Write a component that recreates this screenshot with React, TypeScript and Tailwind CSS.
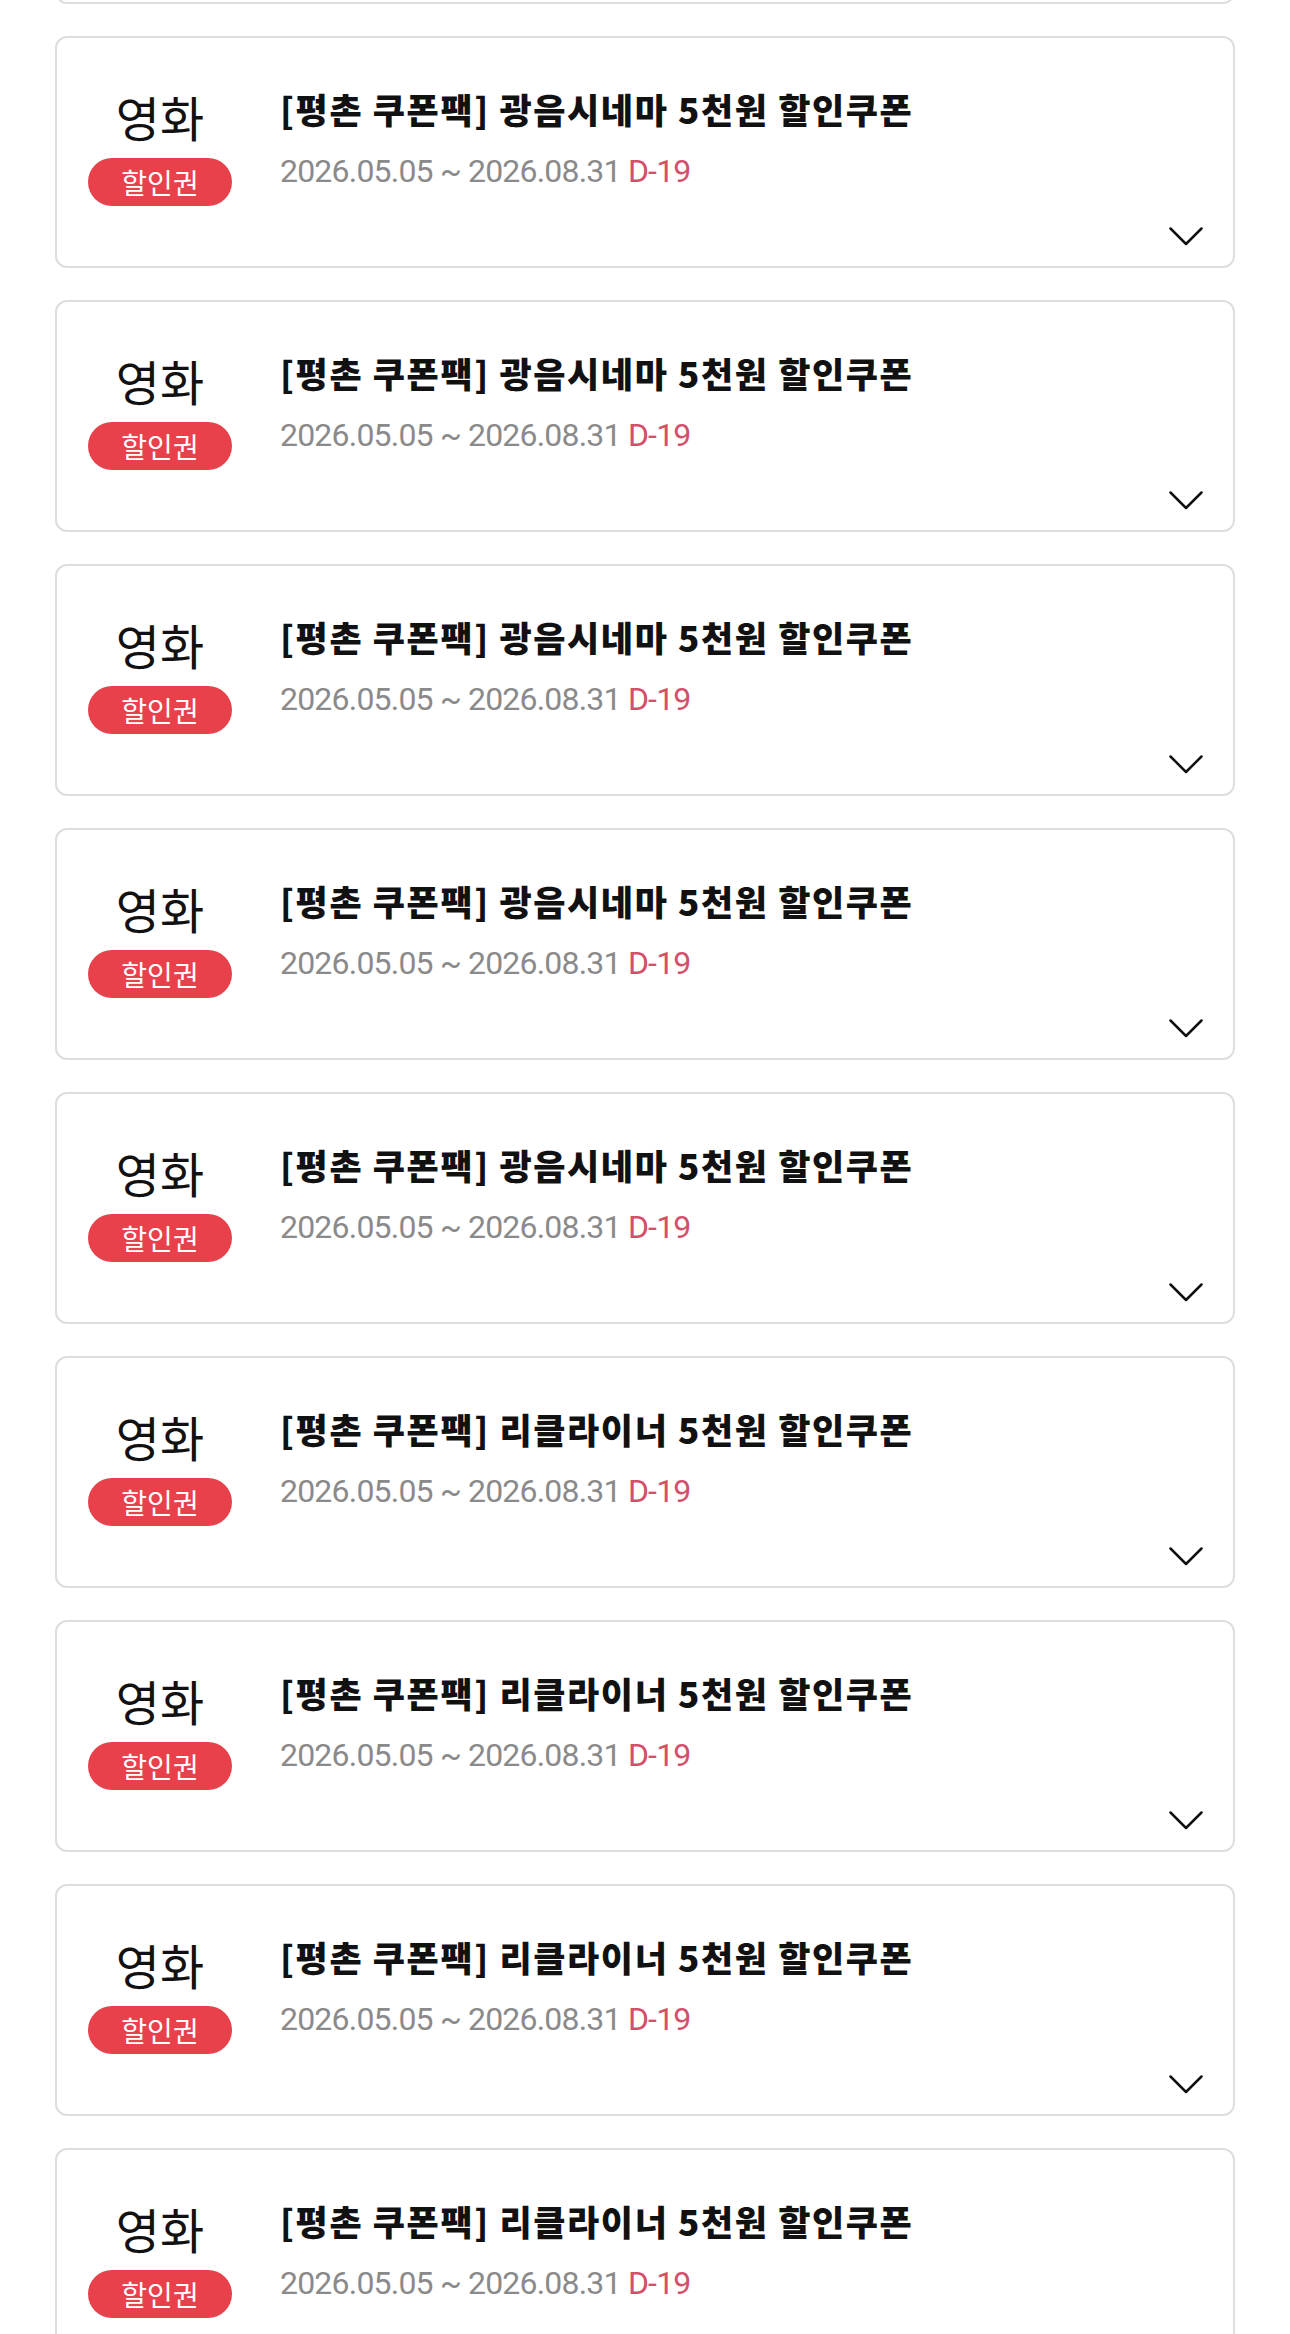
import React from "react";

const KR = '"Noto Sans CJK KR", "Noto Sans", sans-serif';

function Chevron() {
  return (
    <svg width="34" height="19" viewBox="0 0 34 19" fill="none">
      <path d="M1.5 1.5 L17 17 L32.5 1.5" stroke="#111" strokeWidth="2.5" strokeLinecap="round" strokeLinejoin="round" />
    </svg>
  );
}

function EmptyCard() {
  return <div className="h-[232px] shrink-0 rounded-[12px] border-2 border-[#dedede] bg-white" />;
}

function Card({ name }: { name: string }) {
  return (
    <div className="flex h-[232px] shrink-0 rounded-[12px] border-2 border-[#dedede] bg-white">
      <div className="flex w-[206px] shrink-0 flex-col items-center pt-[54px]">
        <div className="text-[48px] leading-none text-[#111]" style={{ fontFamily: KR }}>
          영화
        </div>
        <div
          className="mt-[18px] flex h-[48px] w-[144px] items-center justify-center rounded-full bg-[#e8414b] text-[28px] leading-none text-white"
          style={{ fontFamily: KR }}
        >
          할인권
        </div>
      </div>
      <div className="ml-[17px] flex flex-col pt-[53px]">
        <div
          className="whitespace-nowrap text-[35px] font-black leading-none tracking-[1.6px] text-[#111]"
          style={{ fontFamily: KR }}
        >
          {name}
        </div>
        <div
          className="mt-[29px] whitespace-nowrap text-[32px] leading-none tracking-[-0.8px] text-[#8a8a8a]"
          style={{ fontFamily: 'Roboto, "Noto Sans", sans-serif' }}
        >
          2026.05.05 ~ 2026.08.31 <span className="text-[#d4506a]">D-19</span>
        </div>
      </div>
      <div className="ml-auto mb-[20px] mr-[30px] self-end">
        <Chevron />
      </div>
    </div>
  );
}

export default function App() {
  const a = "[평촌 쿠폰팩] 광음시네마 5천원 할인쿠폰";
  const b = "[평촌 쿠폰팩] 리클라이너 5천원 할인쿠폰";
  const items = [a, a, a, a, a, b, b, b, b];
  return (
    <div className="h-[2334px] overflow-hidden bg-white">
      <div className="mx-[55px] -mt-[228px] flex flex-col gap-[32px]">
        <EmptyCard />
        {items.map((n, i) => (
          <Card key={i} name={n} />
        ))}
      </div>
    </div>
  );
}
